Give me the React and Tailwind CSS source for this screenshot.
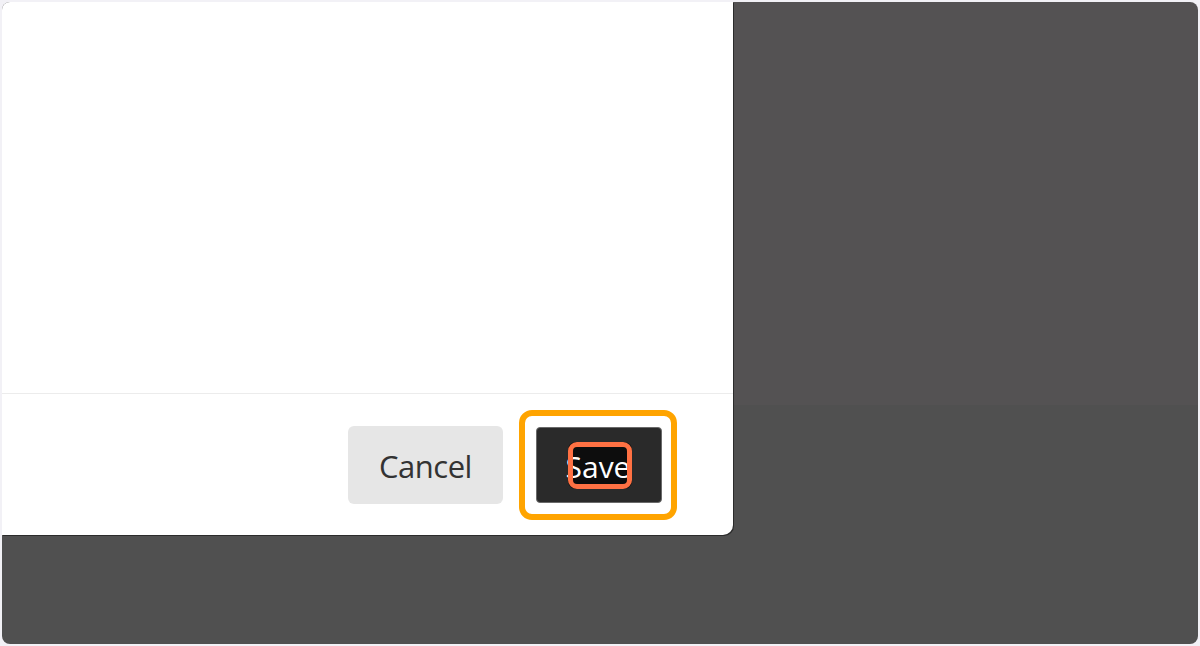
export default function App() {
  return (
    <div className="w-[1200px] h-[646px] bg-[#f2f1f6] p-[2px]" style={{ fontFamily: '"Open Sans", "Noto Sans", sans-serif' }}>
      <div className="relative w-full h-full rounded-[8px] overflow-hidden flex flex-col">
        <div className="h-[403px] bg-[#545253]" />
        <div className="flex-1 bg-[#505050]" />
        <div className="absolute left-0 top-0 w-[731px] h-[533px] bg-white rounded-br-[10px] shadow-[1px_1px_0_#2b2b2b] flex flex-col">
          <div className="h-[392px] border-b border-[#ececec]" />
          <div className="flex-1 flex items-center justify-end gap-[33px] pr-[71px]">
            <button className="w-[155px] h-[78px] rounded-[6px] bg-[#e6e6e6] text-[#333333] text-[31px] tracking-[-0.5px] leading-none pt-[4px]">
              Cancel
            </button>
            <button className="relative w-[126px] h-[76px] rounded-[4px] bg-[#2a2a2a] border border-[#6a6a6a] text-white text-[30px] font-medium leading-none flex items-center justify-center pt-[5px]">
              <span className="absolute left-[31px] top-[14px] w-[64px] h-[47px] bg-[#0d0d0d] rounded-[8px]" />
              <span className="relative -ml-[2px]">Save</span>
              <span className="absolute left-[31px] top-[14px] w-[64px] h-[47px] border-[5px] border-[#ff7143] rounded-[9px]" />
              <span className="absolute -left-[18px] -right-[16px] -top-[18px] -bottom-[18px] border-[6px] border-[#ffa400] rounded-[13px]" />
            </button>
          </div>
        </div>
      </div>
    </div>
  );
}
